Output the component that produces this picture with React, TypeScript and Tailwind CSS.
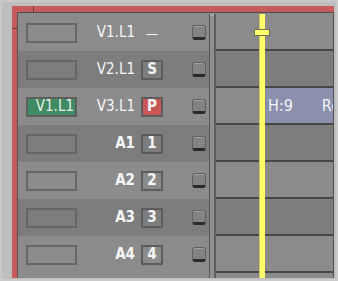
import React from "react";

type Track = {
  label: string;
  tag: string;
  tagStyle: "none" | "plain" | "red";
  patched?: string;
  dark: boolean;
};

const tracks: Track[] = [
  { label: "V1.L1", tag: "—", tagStyle: "none", dark: false },
  { label: "V2.L1", tag: "S", tagStyle: "plain", dark: true },
  { label: "V3.L1", tag: "P", tagStyle: "red", patched: "V1.L1", dark: false },
  { label: "A1", tag: "1", tagStyle: "plain", dark: true },
  { label: "A2", tag: "2", tagStyle: "plain", dark: false },
  { label: "A3", tag: "3", tagStyle: "plain", dark: true },
  { label: "A4", tag: "4", tagStyle: "plain", dark: false },
];

const font = { fontFamily: '"DejaVu Sans Condensed", "DejaVu Sans", sans-serif' };

const TrackRow = ({ t }: { t: Track }) => (
  <div className={`flex items-center h-[37px] shrink-0 pl-[8px] ${t.dark ? "bg-[#7d7d7d]" : "bg-[#8b8b8b]"}`}>
    {/* source patch box */}
    {t.patched ? (
      <div className="w-[51px] h-[20px] border-2 border-[#5f5f5f] bg-[#3f8b63] flex items-center justify-end pr-[1px] text-[15px] text-[#e6f2e8] leading-none">
        {t.patched}
      </div>
    ) : (
      <div className="w-[51px] h-[20px] border-2 border-[#666666]" />
    )}
    <div className={`w-[58px] text-right text-[15px] leading-none text-[#f6f6f6] ${t.label.length < 3 ? "font-bold" : ""}`}>
      {t.label}
    </div>
    {t.tagStyle === "none" ? (
      <div className="ml-[6px] w-[22px] h-[20px] flex items-center justify-center text-[14px] text-[#f2f2f2] leading-none">{t.tag}</div>
    ) : (
      <div
        className={`ml-[6px] w-[22px] h-[20px] border-2 border-[#5c5c5c] flex items-center justify-center text-[15px] font-bold leading-none text-[#f4f4f4] ${
          t.tagStyle === "red" ? "bg-[#c85656]" : ""
        }`}
      >
        {t.tag}
      </div>
    )}
    {/* monitor button */}
    <div className="ml-[29px] w-[14px] h-[15px] rounded-[3px] bg-[#838383] border border-[#606060] border-b-[3px] border-b-[#2a2a2a] shadow-[inset_0_1px_0_#a2a2a2]" />
  </div>
);

const TimelineRow = ({ t, idx }: { t: Track; idx: number }) => (
  <div className={`flex h-[37px] shrink-0 border-b-2 border-[#474747] ${t.dark ? "bg-[#7d7d7d]" : "bg-[#8b8b8b]"}`}>
    {idx === 2 && (
      <>
        <div className="w-[50px] shrink-0" />
        <div className="flex-1 bg-[#8b90ae] flex items-center pl-[2px] text-[16px] text-[#f4f4f8] leading-none whitespace-nowrap overflow-hidden">
          <span>H:9</span>
          <span className="ml-[29px]">Ro</span>
        </div>
      </>
    )}
  </div>
);

export default function App() {
  return (
    <div className="w-[338px] h-[281px] bg-[#bebebe] border-2 border-[#c9c9c9] pl-[10px] pt-[4px] overflow-hidden" style={font}>
      <div className="w-[322px] h-[272px] flex flex-col bg-[#c75b5b]">
        {/* top red band */}
        <div className="h-[6px] flex shrink-0">
          <div className="w-[22px] border-r border-[#6b3b3b]" />
          <div className="flex-1" />
        </div>
        <div className="flex flex-1 min-h-0">
          {/* left red band */}
          <div className="w-[5px] flex flex-col shrink-0">
            <div className="h-[17px] border-b border-[#6b3b3b]" />
          </div>
          {/* panel */}
          <div className="flex-1 flex border-t border-l border-r border-[#505050] bg-[#8b8b8b] pt-[1px] min-w-0">
            <div className="w-[191px] flex flex-col shrink-0">
              {tracks.map((t) => (
                <TrackRow key={t.label} t={t} />
              ))}
            </div>
            {/* splitter */}
            <div className="w-[7px] shrink-0 flex flex-col border-l border-[#565656] border-r-2 border-r-[#5e5e5e] bg-[#8f8f8f]">
              <div className="h-[2px] bg-[#ababab]" />
            </div>
            {/* timeline */}
            <div className="flex-1 relative flex flex-col min-w-0">
              {tracks.map((t, i) => (
                <TimelineRow key={t.label} t={t} idx={i} />
              ))}
              {/* playhead */}
              <div className="absolute left-[43px] top-0 bottom-0 w-[6px] bg-[#ffff6c] border-l border-[#c8c860]" />
              <div className="absolute left-[38px] top-[15px] w-[16px] h-[7px] bg-[#ffff6c] border border-[#6e6e50]" />
            </div>
          </div>
        </div>
      </div>
    </div>
  );
}
